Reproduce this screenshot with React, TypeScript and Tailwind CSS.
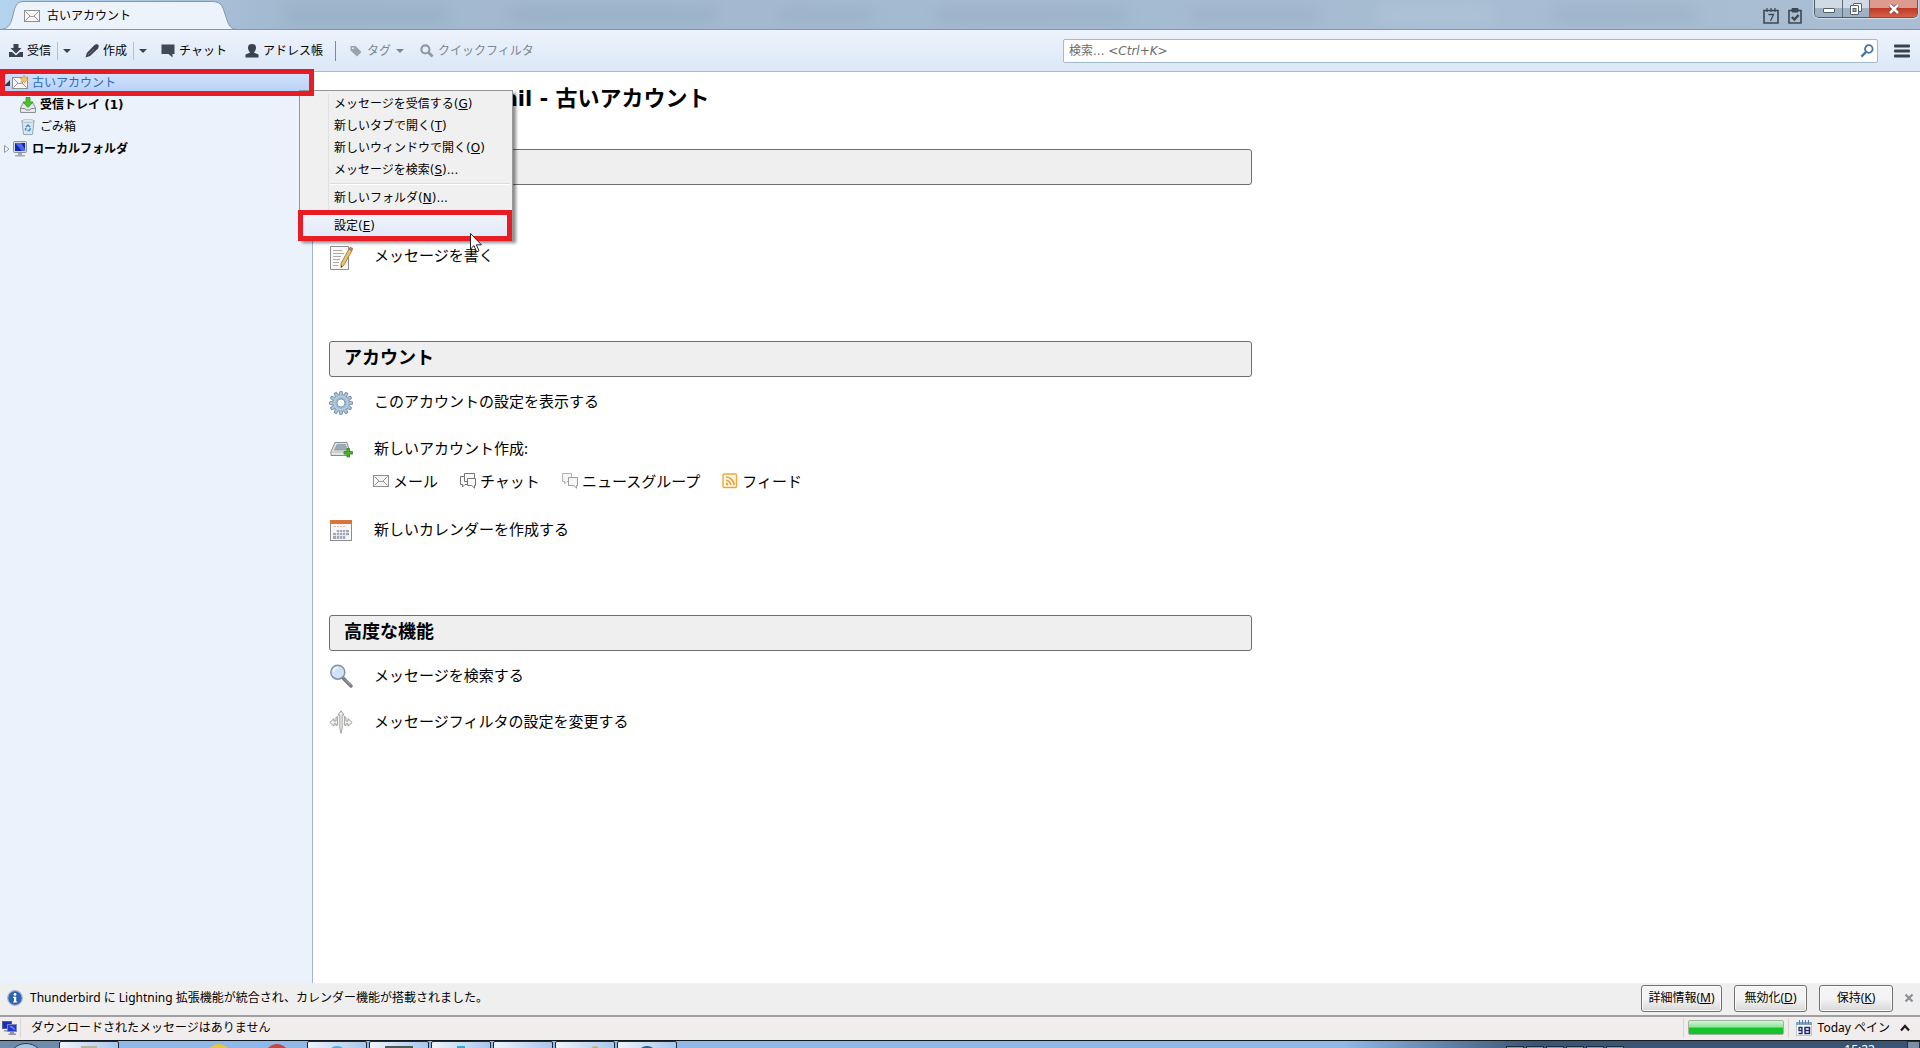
import React, { useState } from 'react';
import { clsx } from 'clsx';

interface MenuEntry {
    label: string;
    accessKey: string;
    suffix?: string;
    active?: boolean;
}

const MENU_GROUPS: MenuEntry[][] = [
    [
        { label: 'メッセージを受信する', accessKey: 'G' },
        { label: '新しいタブで開く', accessKey: 'T' },
        { label: '新しいウィンドウで開く', accessKey: 'O' },
        { label: 'メッセージを検索', accessKey: 'S', suffix: '...' },
    ],
    [{ label: '新しいフォルダ', accessKey: 'N', suffix: '...' }],
    [{ label: '設定', accessKey: 'E', active: true }],
];

const WIDE_FONT = "font-['DejaVu_Sans','Noto_Sans_CJK_JP',sans-serif]";

const EnvelopeIcon = ({ star = false }: { star?: boolean }) => (
    <svg viewBox="0 0 16 16" className="w-4 h-4 shrink-0" fill="none">
        <rect x="0.5" y="2.5" width="15" height="11" fill="#f6f6f6" stroke="#8f8f8f" />
        <path d="M1.5 3.5 L6.5 8.5 H9.5 L14.5 3.5 M1.5 12.5 L6 8 M14.5 12.5 L10 8" stroke="#929292" />
        {star && (
            <path
                d="M12 0 L13 2.6 L15.6 1.6 L14.4 4 L16 5.6 L13.6 6 L13 8.4 L11.4 6.4 L9 7.4 L9.8 5 L8 3.4 L10.6 3 Z"
                fill="#f4c46a"
                stroke="#d79a3c"
                strokeWidth="0.6"
            />
        )}
    </svg>
);

const InboxIcon = () => (
    <svg viewBox="0 0 16 16" className="w-4 h-4 shrink-0">
        <path d="M3 6 H13 L15.5 11 V15.5 H0.5 V11 Z" fill="#e6e8ea" stroke="#8a9096" />
        <path d="M1 11.5 H5 L6 13 H10 L11 11.5 H15" fill="none" stroke="#8a9096" />
        <path d="M6 0.5 H10 V5 H13 L8 10.5 L3 5 H6 Z" fill="#4fc22f" stroke="#2f8f1c" strokeWidth="0.8" />
    </svg>
);

const TrashIcon = () => (
    <svg viewBox="0 0 16 16" className="w-4 h-4 shrink-0">
        <path d="M2 2 H14 L12.5 15.5 H3.5 Z" fill="#dbe7ef" stroke="#93a8b6" />
        <path d="M1.5 2 L4 0.8 H12 L14.5 2 L12.5 3.2 H3.5 Z" fill="#f7fafc" stroke="#93a8b6" strokeWidth="0.8" />
        <path d="M6 8 L8 6 L10 8 M10.5 9 L9.5 11.5 H7.5 M6 11.5 L5.4 9" fill="none" stroke="#3f8fc4" strokeWidth="1.5" />
    </svg>
);

const ComputerIcon = () => (
    <svg viewBox="0 0 16 16" className="w-4 h-4 shrink-0">
        <rect x="1.5" y="0.5" width="13" height="11" rx="1" fill="#d5d9de" stroke="#8b929a" />
        <rect x="3" y="2" width="10" height="8" fill="#1425b8" />
        <path d="M3 2 H9 L13 8 V10 H10 Z" fill="#4d67e8" />
        <path d="M6 12 H10 V14 H13 V15.5 H3 V14 H6 Z" fill="#a3a9b0" />
    </svg>
);

const NetworkIcon = () => (
    <svg viewBox="0 0 16 16" className="w-4 h-4 shrink-0">
        <rect x="0.5" y="1.5" width="9" height="7" fill="#1a2cc4" stroke="#56618c" />
        <path d="M2 10 H6 V11.5 H2 Z" fill="#9097a0" />
        <rect x="5.5" y="4.5" width="9" height="7" fill="#2436d8" stroke="#7e88b5" />
        <path d="M7 6 H10 L13 9 V10.5 Z" fill="#6d80f2" />
        <path d="M8 12 H12 V13.5 H14 V15 H6.5 V13.5 H8 Z" fill="#8e959d" />
    </svg>
);

const ComposeIcon = () => (
    <svg viewBox="0 0 24 24" className="w-6 h-6 mt-1">
        <path d="M1.5 0.5 H19.5 V23.5 H1.5 Z" fill="#f8f8f8" stroke="#8f8f8f" />
        <path d="M4 4.5 H13 M4 7.5 H15 M4 10.5 H12 M4 13.5 H11 M4 16.5 H10 M4 19.5 H9" stroke="#acacac" />
        <path d="M20 3 L23 4.5 L15 19 L12 21.5 L12 17.5 Z" fill="#ecc46a" stroke="#8e7134" strokeWidth="0.8" />
        <path d="M20 3 L21 1 L24 2.5 L23 4.5 Z" fill="#d9757a" stroke="#b0565c" strokeWidth="0.6" />
        <path d="M12 19.5 L12 21.5 L13.6 20.2 Z" fill="#333" />
    </svg>
);

const TEETH = [0, 30, 60, 90, 120, 150, 180, 210, 240, 270, 300, 330];

const GearIcon = () => (
    <svg viewBox="0 0 24 24" className="w-6 h-6 mt-[2px]">
        {TEETH.map((angle) => (
            <path
                key={angle}
                d="M10 5 L10.9 0.4 H13.1 L14 5 Z"
                fill="#b3c9da"
                stroke="#728fa6"
                strokeWidth="0.9"
                transform={`rotate(${angle} 12 12)`}
            />
        ))}
        <circle cx="12" cy="12" r="8" fill="#b8cddd" stroke="#8aa5ba" strokeWidth="0.6" />
        <circle cx="12" cy="12" r="6" fill="#9dbad1" />
        <circle cx="12" cy="12" r="4" fill="#fff" stroke="#7896ae" strokeWidth="0.9" />
    </svg>
);

const NewAccountIcon = () => (
    <svg viewBox="0 0 24 24" className="w-6 h-6 mt-[2px]">
        <path d="M6 5.5 H18 L20.5 14 V18.5 H2 V14.5 Z" fill="#e3e6e8" stroke="#858b90" />
        <path d="M8 7.5 H16.5 L18 13 H5.5 Z" fill="#9fabb4" stroke="#88929a" strokeWidth="0.7" />
        <path d="M3 15 H16" stroke="#b3b9bd" />
        <path d="M18 11.5 H20.5 V14.5 H23.5 V17 H20.5 V20 H18 V17 H15 V14.5 H18 Z" fill="#45b424" stroke="#2c8418" strokeWidth="0.8" />
    </svg>
);

const CalendarIcon = () => (
    <svg viewBox="0 0 24 24" className="w-6 h-6">
        <rect x="1.5" y="2.5" width="21" height="20" fill="#f7f7f7" stroke="#8d8d8d" />
        <rect x="1" y="2" width="22" height="4" fill="#d9743a" />
        <path d="M5 8.5 H17" stroke="#e2b8a2" strokeDasharray="2 1" />
        <path d="M7 12 H20 V18 H17 V21 H4 V15 H7 Z" fill="#9fa8b4" />
        <path d="M4 14.5 H20 M4 17.5 H20 M7.5 12 V21 M10.5 12 V21 M13.5 12 V21 M16.5 12 V21" stroke="#f4f4f4" strokeWidth="0.8" />
    </svg>
);

const SearchIcon = () => (
    <svg viewBox="0 0 24 24" className="w-6 h-6">
        <path d="M14.5 14.5 L22 22" stroke="#77797c" strokeWidth="3.4" strokeLinecap="round" />
        <path d="M16 15.4 L22 21.4" stroke="#b1b3b6" strokeWidth="1" />
        <circle cx="8.8" cy="8.2" r="7" fill="#cfe2f8" stroke="#8391a0" strokeWidth="1.5" />
        <path d="M4.5 8 A4.6 4.6 0 0 1 9 3.8" fill="none" stroke="#f2f8ff" strokeWidth="1.6" />
    </svg>
);

const FilterIcon = () => (
    <svg viewBox="0 0 24 24" className="w-6 h-6" fill="#f1f1ef" stroke="#969692" strokeWidth="0.9">
        <path d="M12 0.8 L15 5 H13.2 V18 L12 23.4 L10.8 18 V5 H9 Z" />
        <path d="M0.8 12.4 L5 8.6 V11 H7 V7.4 L8.6 6.4 V15 L7 15.6 V13.8 H5 V16.2 Z" />
        <path d="M23.2 12.4 L19 8.6 V11 H17 V7.4 L15.4 6.4 V15 L17 15.6 V13.8 H19 V16.2 Z" />
    </svg>
);

const ChatIcon = () => (
    <svg viewBox="0 0 16 16" className="w-4 h-4" fill="#fafafa" stroke="#757575" strokeLinejoin="round">
        <path d="M0.5 3.5 H8.5 V11.5 H5 L2.5 14 V11.5 H0.5 Z" />
        <path d="M4.5 0.5 H14.5 V8.5 H4.5 Z" />
        <path d="M7.5 5.5 H15.5 V12.5 H14.5 V15.2 L11.8 12.5 H7.5 Z" />
    </svg>
);

const NewsgroupIcon = () => (
    <svg viewBox="0 0 16 16" className="w-4 h-4" fill="#f6f6f6" stroke="#9d9d9d" strokeLinejoin="round">
        <path d="M0.5 0.5 H9.5 V8.5 H5 L2.5 11 V8.5 H0.5 Z" stroke="#b3b3b3" />
        <path d="M6.5 4.5 H15.5 V12.5 H14.5 V15.2 L11.8 12.5 H6.5 Z" />
    </svg>
);

const FeedIcon = () => (
    <svg viewBox="0 0 16 16" className="w-4 h-4" fill="none">
        <rect x="1" y="1" width="13.5" height="13.5" rx="1" fill="#fff6e6" stroke="#eda83c" strokeWidth="1.4" />
        <path d="M4 4 A8 8 0 0 1 12 12 M4 7.4 A4.6 4.6 0 0 1 8.6 12" stroke="#eba035" strokeWidth="1.6" />
        <circle cx="5" cy="11" r="1.2" fill="#eba035" />
    </svg>
);

const DropArrow = () => (
    <svg viewBox="0 0 8 4" className="w-2 h-1">
        <path d="M0 0 H8 L4 4 Z" fill="currentColor" />
    </svg>
);

const TabStrip = () => (
    <header className="relative h-[30px] shrink-0 flex items-stretch justify-between overflow-hidden border-b border-[#7f97ac] bg-linear-to-r from-[#b4d3ee] via-[#a2b8cf] via-15% to-[#a9bed3]">
        <div className="absolute inset-0 flex justify-around items-center pl-64 pr-48 blur-sm opacity-30">
            <span className="w-40 h-3 bg-[#7f95ad]" />
            <span className="w-52 h-3 bg-[#7f95ad]" />
            <span className="w-24 h-3 bg-[#8499b0]" />
            <span className="w-48 h-3 bg-[#7f95ad]" />
            <span className="w-32 h-4 bg-[#8ba0b7]" />
            <span className="w-28 h-4 bg-[#c4d4e5]" />
            <span className="w-36 h-3 bg-[#7f95ad]" />
        </div>
        <div className="relative flex items-center w-60">
            <svg viewBox="0 0 240 30" className="absolute left-0 top-0 w-60 h-[30px]">
                <path
                    d="M0 29.5 C7 29 10 26 12 19 L14 11 C16 4 18 1.5 24 1.5 H212 C220 1.5 222 5 224 11 L227 20 C229 27 232 29.5 238 29.5 V30 H0 Z"
                    fill="#edf3fb"
                    stroke="#8399ad"
                />
            </svg>
            <button className="relative flex items-center gap-[7px] ml-6 pt-[2px] text-left">
                <EnvelopeIcon />
                古いアカウント
            </button>
        </div>
        <div className="relative flex items-start pr-[2px]">
            <button aria-label="カレンダー" className="mt-2 mr-2">
                <svg viewBox="0 0 16 16" className="w-4 h-4" fill="none" stroke="#3d4854">
                    <path d="M1 2.5 H15 V15 H1 Z" strokeWidth="1.6" />
                    <path d="M4 0 V4 M8 0 V4 M12 0 V4" strokeWidth="1.2" />
                    <path d="M5.5 6.5 H10.5 L7.5 13" strokeWidth="1.3" />
                </svg>
            </button>
            <button aria-label="ToDo" className="mt-2 mr-[11px]">
                <svg viewBox="0 0 16 16" className="w-4 h-4" fill="none" stroke="#3d4854">
                    <path d="M2 2.5 H14 V15 H2 Z" strokeWidth="1.6" />
                    <path d="M5 0.5 H11 V4 H5 Z" fill="#3d4854" />
                    <path d="M4.8 9 L7.4 11.6 L11.6 7" strokeWidth="2.4" />
                </svg>
            </button>
            <div className="flex h-[18px] border border-t-0 border-[#4e5c6b] rounded-b-[5px] overflow-hidden shadow-[0_0_1px_1px_rgba(255,255,255,0.5)]">
                <button aria-label="最小化" className="w-7 flex items-center justify-center border-r border-[#5d6b7a] bg-linear-to-b from-[#cfdae5] from-50% to-[#9fb2c5] to-50%">
                    <svg viewBox="0 0 12 6" className="w-3 h-[6px] mt-1">
                        <rect x="0.5" y="0.5" width="11" height="4" rx="0.5" fill="#fff" stroke="#55606c" />
                    </svg>
                </button>
                <button aria-label="元に戻す" className="w-[27px] flex items-center justify-center border-r border-[#5d6b7a] bg-linear-to-b from-[#cfdae5] from-50% to-[#9fb2c5] to-50%">
                    <svg viewBox="0 0 12 12" className="w-3 h-3" fill="#fff" stroke="#55606c">
                        <rect x="3.5" y="0.5" width="8" height="8" rx="0.5" />
                        <rect x="0.5" y="2.5" width="8" height="9" rx="0.5" />
                        <rect x="3" y="5.5" width="3" height="3" fill="#9fb2c5" />
                    </svg>
                </button>
                <button aria-label="閉じる" className="w-[47px] flex items-center justify-center bg-linear-to-b from-[#dc9b8e] from-45% via-[#bf3a26] via-50% to-[#d4604a]">
                    <svg viewBox="0 0 12 10" className="w-3 h-[10px]" fill="none">
                        <path d="M2 1 L10 9 M10 1 L2 9" stroke="#6b3a35" strokeWidth="4" />
                        <path d="M2 1 L10 9 M10 1 L2 9" stroke="#fff" strokeWidth="2.6" />
                    </svg>
                </button>
            </div>
        </div>
    </header>
);

const Toolbar = () => {
    const [query, setQuery] = useState('');

    return (
        <div className="h-[42px] shrink-0 flex items-center pl-2 pr-[10px] border-b border-[#a9bdd1] bg-linear-to-b from-[#edf3fb] to-[#dbe8f7]">
            <button className="flex items-center gap-[3px] pr-[6px]">
                <svg viewBox="0 0 16 14" className="w-4 h-[14px]" fill="#3b4350">
                    <path d="M5.5 0 H10.5 V4 H13.5 L8 9.5 L2.5 4 H5.5 Z" />
                    <path d="M1 8 H4 L8 11.5 L12 8 H15 V13 H1 Z" />
                </svg>
                受信
            </button>
            <button aria-label="受信メニュー" className="h-[18px] px-[5px] border-l border-[#b4c0cd] text-[#3b4350]">
                <DropArrow />
            </button>
            <button className="flex items-center gap-1 pl-[9px] pr-[6px]">
                <svg viewBox="0 0 14 14" className="w-[14px] h-[14px]" fill="#3b4350">
                    <path d="M9 1.5 C10.5 0 13 0 13.5 1 C14 2.5 13.5 4 12.5 5 L5 12 L0.5 13.5 L1.8 9 Z" />
                    <path d="M3 11 L9 5" stroke="#7d8794" strokeWidth="0.8" />
                </svg>
                作成
            </button>
            <button aria-label="作成メニュー" className="h-[18px] px-[5px] border-l border-[#b4c0cd] text-[#3b4350]">
                <DropArrow />
            </button>
            <button className="flex items-center gap-1 pl-[9px]">
                <svg viewBox="0 0 14 14" className="w-[14px] h-[14px]" fill="#414956">
                    <path d="M0.5 0.5 H13.5 V10 H11.5 V13.5 L7.5 10 H0.5 Z" />
                </svg>
                チャット
            </button>
            <button className="flex items-center gap-1 pl-[18px]">
                <svg viewBox="0 0 14 14" className="w-[14px] h-[14px]" fill="#3b4350">
                    <path d="M3 3.6 C3 1 4.6 0 7 0 C9.4 0 11 1 11 3.6 C11 6 10.2 7.2 9.2 8 V8.8 L13.5 10.4 V13.5 H0.5 V10.4 L4.8 8.8 V8 C3.8 7.2 3 6 3 3.6 Z" />
                </svg>
                アドレス帳
            </button>
            <span className="w-px h-5 ml-3 mr-[14px] bg-[#7f8b98]" />
            <button disabled className="flex items-center gap-[5px] text-[#7d8590]">
                <svg viewBox="0 0 12 12" className="w-3 h-3" fill="#9aa2ad">
                    <path d="M0.5 1 H5.5 L11.5 7 L7 11.5 L0.5 5.5 Z" />
                    <circle cx="3" cy="3.3" r="1" fill="#e4edf8" />
                </svg>
                タグ
                <DropArrow />
            </button>
            <button disabled className="flex items-center gap-1 pl-4 text-[#7d8590]">
                <svg viewBox="0 0 14 14" className="w-[14px] h-[14px]" fill="none" stroke="#9199a4">
                    <circle cx="5.4" cy="5.4" r="4" strokeWidth="2.2" />
                    <path d="M8.5 8.5 L12.6 12.6" strokeWidth="2.8" />
                </svg>
                クイックフィルタ
            </button>
            <div className="relative w-[815px] ml-auto">
                <input
                    id="global-search"
                    type="text"
                    value={query}
                    onChange={(e) => setQuery(e.target.value)}
                    className="block w-full h-6 px-[5px] pr-6 bg-white border border-[#a3b9cc] rounded-[2px] outline-none"
                />
                {query === '' && (
                    <label htmlFor="global-search" className={clsx(WIDE_FONT, 'absolute left-[6px] top-[3px] leading-[18px] text-[#6b6b6b] pointer-events-none')}>
                        検索... <i>&lt;Ctrl+K&gt;</i>
                    </label>
                )}
                <svg viewBox="0 0 14 14" className="absolute right-1 top-[5px] w-[14px] h-[14px]" fill="none" stroke="#47749c">
                    <circle cx="8.8" cy="5" r="3.8" strokeWidth="1.8" />
                    <path d="M6 8 L1.4 12.6" strokeWidth="2.4" />
                </svg>
            </div>
            <button aria-label="メニュー" className="ml-4">
                <svg viewBox="0 0 16 14" className="w-4 h-[14px]" fill="#38414e">
                    <rect y="0.5" width="16" height="3" rx="1" />
                    <rect y="5.5" width="16" height="3" rx="1" />
                    <rect y="10.5" width="16" height="3" rx="1" />
                </svg>
            </button>
        </div>
    );
};

const ROW = 'flex items-center gap-1 w-full h-[22px] text-left';

const FolderPane = () => (
    <nav className={clsx(WIDE_FONT, 'relative w-[313px] shrink-0 border-r border-[#a5b5c7] bg-[#ecf2fb]')}>
        <button className={clsx(ROW, 'pl-1 text-[#2b6cc4] bg-linear-to-b from-[#d3e2fc] to-[#b7d0f7]')}>
            <svg viewBox="0 0 6 8" className="w-[6px] h-2 -mr-[2px]">
                <path d="M6 1 V7 H0 Z" fill="#2f3b47" />
            </svg>
            <EnvelopeIcon star />
            古いアカウント
        </button>
        <button className={clsx(ROW, 'pl-5 font-bold')}>
            <InboxIcon />
            受信トレイ (1)
        </button>
        <button className={clsx(ROW, 'pl-5')}>
            <TrashIcon />
            ごみ箱
        </button>
        <button className={clsx(ROW, 'pl-1 font-bold')}>
            <svg viewBox="0 0 6 8" className="w-[6px] h-2 -mr-[2px]">
                <path d="M0.5 0.5 L5 4 L0.5 7.5 Z" fill="#fff" stroke="#8d98a3" />
            </svg>
            <ComputerIcon />
            ローカルフォルダ
        </button>
        <div className="absolute -top-[3px] left-0 -right-[2px] h-[27px] border-5 border-[#e81c24] pointer-events-none z-30" />
    </nav>
);

const SectionTitle = ({ children }: { children: React.ReactNode }) => (
    <h2 className="h-9 mb-[2px] px-[14px] border border-[#6e6e6e] rounded-[3px] bg-[#efefef] text-lg leading-[30px] font-bold">
        {children}
    </h2>
);

const ActionRow = ({ icon, children }: { icon: React.ReactNode; children: React.ReactNode }) => (
    <a href="#" className="flex items-center gap-[21px] h-[46px]">
        {icon}
        <span className="pb-[2px]">{children}</span>
    </a>
);

const AccountCentral = () => (
    <main className="flex-1 min-w-0 px-4 pt-2 bg-white text-[15px]">
        <h1 className="h-[34px] mb-[35px] text-[22px] leading-[34px] font-bold">
            <span className={clsx(WIDE_FONT, 'text-[21px] leading-[34px]')}>Thunderbird Mail - </span>
            古いアカウント
        </h1>
        <div className="max-w-[923px]">
            <section className="mb-[62px]">
                <SectionTitle>メール</SectionTitle>
                <ActionRow icon={<InboxIcon />}>メッセージを読む</ActionRow>
                <ActionRow icon={<ComposeIcon />}>メッセージを書く</ActionRow>
            </section>
            <section className="mb-[62px]">
                <SectionTitle>アカウント</SectionTitle>
                <ActionRow icon={<GearIcon />}>このアカウントの設定を表示する</ActionRow>
                <div className="flex items-center gap-[21px] h-[46px]">
                    <NewAccountIcon />
                    <span>新しいアカウント作成:</span>
                </div>
                <div className="flex items-center gap-[22px] h-5 mb-4 ml-11">
                    <a href="#" className="flex items-center gap-1"><EnvelopeIcon />メール</a>
                    <a href="#" className="flex items-center gap-1"><ChatIcon />チャット</a>
                    <a href="#" className="flex items-center gap-1"><NewsgroupIcon />ニュースグループ</a>
                    <a href="#" className="flex items-center gap-1"><FeedIcon />フィード</a>
                </div>
                <ActionRow icon={<CalendarIcon />}>新しいカレンダーを作成する</ActionRow>
            </section>
            <section>
                <SectionTitle>高度な機能</SectionTitle>
                <ActionRow icon={<SearchIcon />}>メッセージを検索する</ActionRow>
                <ActionRow icon={<FilterIcon />}>メッセージフィルタの設定を変更する</ActionRow>
            </section>
        </div>
    </main>
);

const ContextMenu = () => (
    <div className={clsx(WIDE_FONT, 'absolute left-[299px] top-[18px] w-[214px] z-20')}>
        <div role="menu" className="relative p-[2px] border border-[#979797] bg-[#f0f0f0] shadow-[3px_3px_3px_rgba(0,0,0,0.45)]">
            <div className="absolute left-7 inset-y-[3px] w-px bg-[#e0e0e0]" />
            {MENU_GROUPS.map((group, i) => (
                <div key={i} className="relative">
                    {i > 0 && <div className="h-[2px] my-[2px] ml-7 bg-[#dcdcdc] border-b border-white" />}
                    {group.map((item) => (
                        <button
                            key={item.accessKey}
                            role="menuitem"
                            className={clsx(
                                'block w-full h-[22px] pl-8 text-left leading-[22px]',
                                item.active && 'bg-linear-to-b from-[#f1f4fa] to-[#e0e9f8]'
                            )}
                        >
                            {item.label}(<u>{item.accessKey}</u>){item.suffix}
                        </button>
                    ))}
                </div>
            ))}
        </div>
        <div className="absolute -left-px right-px -bottom-px h-[31px] border-5 border-[#e81c24] pointer-events-none" />
        <svg viewBox="0 0 12 20" className="absolute left-[171px] top-[143px] w-3 h-5">
            <path d="M0.5 0.5 V16 L4 12.6 L6.6 18.8 L9 17.8 L6.4 11.8 H11.4 Z" fill="#fff" stroke="#222" />
        </svg>
    </div>
);

const PUSH_BUTTON =
    'h-[27px] px-[6px] border border-[#707070] rounded-[3px] bg-linear-to-b from-[#f4f4f4] from-50% to-[#d8d8d8] shadow-[inset_0_0_0_1px_#fbfbfb]';

const NotificationBar = () => (
    <div className="h-[34px] shrink-0 flex items-center pl-[7px] pr-[6px] pb-[2px] border-b-2 border-[#a0a0a0] bg-[#efefef]">
        <svg viewBox="0 0 16 16" className="w-4 h-4">
            <circle cx="8" cy="8" r="7.3" fill="#2f62ae" stroke="#9db4d6" strokeWidth="1.2" />
            <circle cx="8" cy="4.4" r="1.4" fill="#fff" />
            <path d="M6 6.8 H9.2 V11.4 H10.2 V12.6 H6 V11.4 H7 V8 H6 Z" fill="#fff" />
        </svg>
        <p className="ml-[7px]">Thunderbird に Lightning 拡張機能が統合され、カレンダー機能が搭載されました。</p>
        <div className="flex items-center gap-3 ml-auto">
            <button className={clsx(PUSH_BUTTON, 'w-[81px]')}>詳細情報(<u>M</u>)</button>
            <button className={clsx(PUSH_BUTTON, 'w-[73px]')}>無効化(<u>D</u>)</button>
            <button className={clsx(PUSH_BUTTON, 'w-[74px]')}>保持(<u>K</u>)</button>
        </div>
        <button aria-label="通知を閉じる" className="ml-[11px]">
            <svg viewBox="0 0 10 10" className="w-[10px] h-[10px]">
                <path d="M1.5 1.5 L8.5 8.5 M8.5 1.5 L1.5 8.5" stroke="#8a8f95" strokeWidth="2.2" />
            </svg>
        </button>
    </div>
);

const StatusBar = () => (
    <footer className="h-[23px] shrink-0 flex items-center pl-[2px] pr-[10px] pb-[2px] bg-[#f1edec]">
        <NetworkIcon />
        <span className="w-px h-5 ml-[2px] mr-[10px] bg-[#d9d5d4]" />
        <span>ダウンロードされたメッセージはありません</span>
        <span className="w-px h-5 ml-auto mr-1 bg-[#d9d5d4]" />
        <div
            role="progressbar"
            aria-label="受信状況"
            className="w-24 h-[15px] border border-[#9fb3a0] rounded-[2px] bg-linear-to-b from-[#d4f5d6] via-[#8fe79a] via-45% to-[#17c22c] to-55%"
        />
        <span className="w-px h-5 ml-1 mr-[7px] bg-[#d9d5d4]" />
        <button className="flex items-center gap-[6px]">
            <svg viewBox="0 0 16 16" className="w-4 h-4">
                <rect x="0.5" y="2.5" width="15" height="13" fill="#fff" stroke="#b9c6d6" />
                <rect x="0" y="2" width="16" height="3" fill="#7fa3cb" />
                <path d="M3.5 0 V4 M6.5 0 V4 M9.5 0 V4 M12.5 0 V4" stroke="#5d7fa6" />
                <path d="M6 10.5 H3 V7.5 H6 V13.5 H2.5" fill="none" stroke="#1c2a6b" strokeWidth="1.3" />
                <path d="M9 7.5 H13.5 V13.5 H9 Z M9 10.5 H13.5" fill="none" stroke="#1c2a6b" strokeWidth="1.5" />
            </svg>
            Today ペイン
            <svg viewBox="0 0 10 8" className="w-[10px] h-2 ml-1" fill="none">
                <path d="M1 6.5 L5 2 L9 6.5" stroke="#1d1d1d" strokeWidth="2.2" />
            </svg>
        </button>
    </footer>
);

const TASK = 'h-10 w-[60px] shrink-0 flex justify-center pt-1 border border-[#1c2a3b] rounded-[2px] bg-linear-to-r from-[#eef4fc] to-[#a9c6ea]';

const Taskbar = () => (
    <div className="h-2 shrink-0 flex items-start overflow-hidden border-t border-[#101820] bg-linear-to-r from-[#8fb8e8] from-70% to-[#3c5472] to-80%">
        <span className="w-[59px] h-10 shrink-0 flex justify-center bg-[#6f8bab]">
            <i className="w-9 h-9 mt-[2px] mr-2 rounded-full border border-[#26384c] bg-[#a9c3dd]" />
        </span>
        <span className={TASK}><i className="w-4 h-4 bg-[#b9b49a]" /></span>
        <span className="w-6 h-6 mt-[3px] ml-[88px] shrink-0 rounded-full border-4 border-[#e5c83c] bg-[#5aa7dd]" />
        <span className="w-6 h-6 mt-[3px] ml-[34px] mr-[18px] shrink-0 rounded-full bg-[#c84640]" />
        <span className={TASK}><i className="w-5 h-5 rounded-full bg-[#53acd8]" /></span>
        <div className="flex gap-[2px] ml-[2px]">
            <span className={TASK}><i className="w-7 h-5 bg-[#8aa391] border-2 border-[#4d5c52]" /></span>
            <span className={TASK}><i className="w-2 h-5 bg-[#2fa9d6]" /></span>
            <span className={TASK}><i className="w-2 h-2 mt-[2px] rounded-full bg-[#8fa3a9]" /></span>
            <span className={TASK}><i className="w-2 h-5 ml-5 rounded-full bg-[#c7ac78]" /></span>
            <span className={TASK}><i className="w-5 h-5 rounded-full bg-[#2f5f8f]" /></span>
        </div>
        <div className="flex gap-[2px] mt-[5px] ml-auto mr-[220px]">
            <i className="w-[18px] h-4 border border-[#1e2c3e] bg-[#8899ad]" />
            <i className="w-[18px] h-4 border border-[#1e2c3e] bg-[#8899ad]" />
            <i className="w-[18px] h-4 border border-[#1e2c3e] bg-[#8899ad]" />
            <i className="w-[18px] h-4 border border-[#1e2c3e] bg-[#8899ad]" />
            <i className="w-[18px] h-4 border border-[#1e2c3e] bg-[#8899ad]" />
            <i className="w-[18px] h-4 border border-[#1e2c3e] bg-[#8899ad]" />
        </div>
        <time className="mt-[2px] mr-8 leading-[14px] text-white">15:22</time>
        <span className="w-[13px] h-10 shrink-0 border border-[#22303f] bg-[#7d8fa3]" />
    </div>
);

const App: React.FC = () => (
    <div className="h-screen flex flex-col overflow-hidden bg-white text-black text-xs font-['Noto_Sans','Noto_Sans_CJK_JP',sans-serif]">
        <TabStrip />
        <Toolbar />
        <div className="relative flex-1 min-h-0 flex">
            <FolderPane />
            <AccountCentral />
            <ContextMenu />
        </div>
        <NotificationBar />
        <StatusBar />
        <Taskbar />
    </div>
);

export default App;
